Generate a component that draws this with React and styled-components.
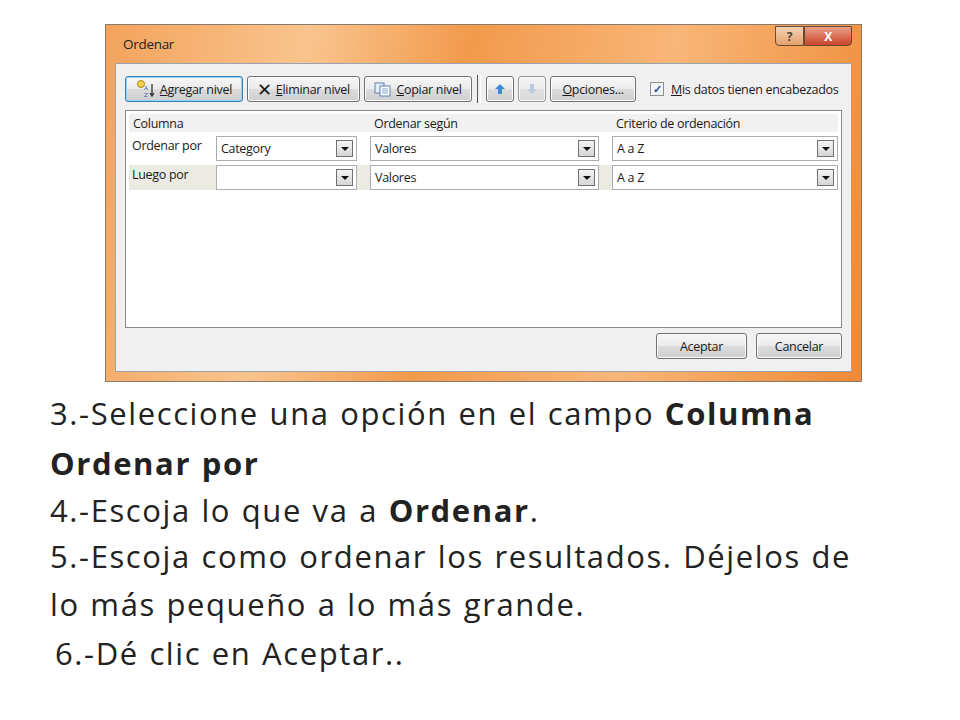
import React from "react";
import styled, { createGlobalStyle } from "styled-components";

const Global = createGlobalStyle`
  body { margin: 0; background: #fff; font-family: "Lato", "Liberation Sans", sans-serif; }
`;

const Page = styled.div`
  width: 960px;
  height: 720px;
  padding-top: 24px;
  box-sizing: border-box;
`;

const Frame = styled.div`
  margin-left: 105px;
  width: 757px;
  height: 358px;
  box-sizing: border-box;
  border: 1px solid #8a7a6a;
  background: linear-gradient(100deg, #f3a35c 0%, #f9c48e 25%, #f29a4c 45%, #f8b678 70%, #ee8a36 100%);
  padding: 0 9px 9px 9px;
  display: flex;
  flex-direction: column;
  font-family: "Open Sans", "Liberation Sans", sans-serif;
  font-size: 12.5px;
  letter-spacing: -0.3px;
  color: #1a1a1a;
`;

const TitleBar = styled.div`
  height: 38px;
  display: flex;
  align-items: center;
  justify-content: space-between;
  padding-left: 8px;
  font-size: 13.5px;
  color: #222;
`;

const Caps = styled.div`
  display: flex;
  align-self: flex-start;
  margin-top: 1px;
`;

const Cap = styled.div`
  width: ${p => p.w}px;
  height: 18px;
  border: 1px solid #6c4a30;
  border-radius: 0 0 ${p => (p.close ? "4px" : "0")} ${p => (p.close ? "0" : "4px")};
  background: ${p => (p.close ? "linear-gradient(#e9a08a,#c8452a)" : "linear-gradient(#f6d3b5,#e2a06b)")};
  color: ${p => (p.close ? "#fff" : "#444")};
  font-weight: bold;
  font-size: 12px;
  display: flex;
  align-items: center;
  justify-content: center;
`;

const Body = styled.div`
  flex: 1;
  background: #f0f0f0;
  border: 1px solid #9aa4b0;
  padding: 11px 9px 9px 9px;
  display: flex;
  flex-direction: column;
`;

const Toolbar = styled.div`
  display: flex;
  align-items: center;
  gap: 4px;
  height: 28px;
`;

const Btn = styled.div`
  height: 26px;
  padding: 0 ${p => p.px ?? 6}px;
  min-width: ${p => p.w || 0}px;
  box-sizing: border-box;
  border: 1px solid ${p => (p.focus ? "#3c7fb1" : "#707070")};
  border-radius: 3px;
  background: linear-gradient(#f6f6f6 0%, #ebebeb 50%, #dcdcdc 51%, #cfcfcf 100%);
  box-shadow: ${p => (p.focus ? "inset 0 0 0 1px #8fd3f5" : "inset 0 0 0 1px #fcfcfc")};
  display: flex;
  align-items: center;
  justify-content: center;
  gap: 4px;
  white-space: nowrap;
  opacity: ${p => (p.dim ? 0.7 : 1)};
`;

const Sep = styled.div`
  width: 2px;
  height: 28px;
  border-left: 1px solid #555;
  border-right: 1px solid #fff;
  margin: 0 1px;
`;

const Check = styled.label`
  margin-left: 10px;
  display: flex;
  align-items: center;
  gap: 7px;
`;

const Box = styled.span`
  width: 12px;
  height: 12px;
  border: 1px solid #8e8f8f;
  background: #f4f4f4;
  color: #2a4fa0;
  font-size: 11px;
  line-height: 12px;
  text-align: center;
  font-weight: bold;
`;

const Grid = styled.div`
  margin-top: 7px;
  height: 218px;
  background: #fff;
  border: 1px solid #828790;
  padding: 3px;
  box-sizing: border-box;
  display: grid;
  grid-template-columns: 83px 158px 242px 1fr;
  grid-auto-rows: min-content;
  row-gap: 4px;
`;

const Head = styled.div`
  background: #f1f1f1;
  height: 18px;
  padding-left: 4px;
  display: flex;
  align-items: center;
  grid-column: ${p => p.span || "auto"};
`;

const Label = styled.div`
  height: 25px;
  padding: 1px 3px;
  box-sizing: border-box;
  background: ${p => (p.alt ? "#ecebe3" : "#fff")};
`;

const ComboCell = styled.div`
  padding: 0 ${p => p.pr ?? 13}px 0 ${p => p.pl ?? 4}px;
  background: ${p => (p.alt ? "#ecebe3" : "#fff")};
`;

const Combo = styled.div`
  height: 25px;
  border: 1px solid #abadb3;
  box-sizing: border-box;
  background: #fff;
  display: flex;
  align-items: center;
  justify-content: space-between;
  padding-left: 4px;
`;

const Arrow = styled.span`
  width: 17px;
  height: 17px;
  margin-right: 3px;
  box-sizing: border-box;
  border: 1px solid #707070;
  background: linear-gradient(#f4f4f4, #d6d6d6);
  display: flex;
  align-items: center;
  justify-content: center;
  &::after {
    content: "";
    border-left: 4px solid transparent;
    border-right: 4px solid transparent;
    border-top: 4px solid #111;
  }
`;

const Footer = styled.div`
  margin-top: 5px;
  display: flex;
  justify-content: flex-end;
  gap: 9px;
`;

const Text = styled.div`
  padding: 6px 0 0 50px;
  font-family: "Open Sans", "Liberation Sans", sans-serif;
  font-size: 31px;
  letter-spacing: 1.6px;
  word-spacing: 1px;
  color: #222;
`;

const Line = styled.div`
  line-height: ${p => p.lh || 50}px;
  padding-left: ${p => p.indent || 0}px;
  white-space: nowrap;
  b { font-weight: 700; }
`;

const Combobox = ({ value }) => (
  <Combo>
    <span>{value}</span>
    <Arrow />
  </Combo>
);

const AddIcon = () => (
  <svg width="20" height="18" viewBox="0 0 20 18">
    <circle cx="5" cy="4" r="3.5" fill="#f2d34a" stroke="#b08a10" />
    <text x="8" y="10" fontSize="6" fill="#2b5fb0" fontFamily="Liberation Sans">A</text>
    <text x="8" y="17" fontSize="6" fill="#2b5fb0" fontFamily="Liberation Sans">Z</text>
    <path d="M16 4v12M14 13l2 3 2-3" stroke="#333" fill="none" strokeWidth="1.3" />
  </svg>
);

const CopyIcon = () => (
  <svg width="18" height="16" viewBox="0 0 18 16">
    <rect x="1" y="2" width="9" height="10" fill="#e6eefa" stroke="#5b7fb5" />
    <rect x="6" y="5" width="10" height="10" fill="#fff" stroke="#5b7fb5" />
    <path d="M8 8h6M8 10h6M8 12h6" stroke="#8aa7d2" />
  </svg>
);

const ArrowIcon = ({ down, color }) => (
  <svg width="12" height="12" viewBox="0 0 12 12" style={down ? { transform: "rotate(180deg)" } : null}>
    <path d="M6 1L11 6H8v5H4V6H1z" fill={color} />
  </svg>
);

export default function App() {
  return (
    <Page>
      <Global />
      <Frame>
        <TitleBar>
          <span>Ordenar</span>
          <Caps>
            <Cap w={27}>?</Cap>
            <Cap w={46} close>X</Cap>
          </Caps>
        </TitleBar>
        <Body>
          <Toolbar>
            <Btn focus w={118} px={4}><AddIcon /><span><u>A</u>gregar nivel</span></Btn>
            <Btn w={113}><span style={{ fontSize: 18 }}>✕</span><span><u>E</u>liminar nivel</span></Btn>
            <Btn w={108}><CopyIcon /><span><u>C</u>opiar nivel</span></Btn>
            <Sep />
            <Btn w={28} px={0}><ArrowIcon color="#3d8bd6" /></Btn>
            <Btn w={28} px={0} dim><ArrowIcon down color="#a7bcd6" /></Btn>
            <Btn w={86}><span><u>O</u>pciones...</span></Btn>
            <Check><Box>✓</Box><span><u>M</u>is datos tienen encabezados</span></Check>
          </Toolbar>
          <Grid>
            <Head span="1 / 3">Columna</Head>
            <Head>Ordenar según</Head>
            <Head>Criterio de ordenación</Head>
            <Label>Ordenar por</Label>
            <ComboCell><Combobox value="Category" /></ComboCell>
            <ComboCell pl={0}><Combobox value="Valores" /></ComboCell>
            <ComboCell pl={0} pr={0}><Combobox value="A a Z" /></ComboCell>
            <Label alt>Luego por</Label>
            <ComboCell alt><Combobox value="" /></ComboCell>
            <ComboCell alt pl={0}><Combobox value="Valores" /></ComboCell>
            <ComboCell pl={0} pr={0}><Combobox value="A a Z" /></ComboCell>
          </Grid>
          <Footer>
            <Btn w={91}>Aceptar</Btn>
            <Btn w={86}>Cancelar</Btn>
          </Footer>
        </Body>
      </Frame>
      <Text>
        <Line>3.-Seleccione una opción en el campo <b>Columna</b></Line>
        <Line><b>Ordenar por</b></Line>
        <Line lh={44}>4.-Escoja lo que va a <b>Ordenar</b>.</Line>
        <Line lh={48}>5.-Escoja como ordenar los resultados. Déjelos de</Line>
        <Line lh={48}>lo más pequeño a lo más grande.</Line>
        <Line indent={5}>6.-Dé clic en Aceptar..</Line>
      </Text>
    </Page>
  );
}
